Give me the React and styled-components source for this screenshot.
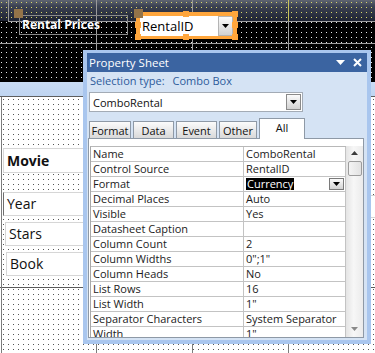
import React from 'react';
import styled, { createGlobalStyle } from 'styled-components';

const font = `"Open Sans", "Noto Sans", "DejaVu Sans", sans-serif`;

const Global = createGlobalStyle`
  html, body { margin: 0; padding: 0; background: #ffffff; }
  body { font-family: ${font}; }
  #root { width: 375px; height: 353px; overflow: hidden; }
`;

const dot = (c) => `conic-gradient(at 1px 1px, transparent 270deg, ${c} 0)`;
const solid = (c) => `linear-gradient(${c}, ${c})`;

const Canvas = styled.div`
  position: relative;
  width: 375px;
  height: 353px;
  overflow: hidden;
  display: flex;
  flex-direction: column;
  font-family: ${font};
`;

const HeaderSection = styled.div`
  position: relative;
  flex: none;
  height: 82px;
  display: flex;
  flex-direction: column;
`;

const HeaderBand = styled.div`
  height: 21px;
  flex: none;
  background-color: #1e2331;
  background-image: ${solid('#9a9a9a')}, ${solid('#9a9a9a')}, ${solid('#9a9a9a')},
    ${solid('#c9c35c')}, ${dot('#d9d66c')},
    linear-gradient(#606672, #3c4252 6px, #1e2332);
  background-size: 1px 100%, 1px 100%, 1px 100%, 1px 100%, 5px 5px, 100% 100%;
  background-position: 8px 0, 96px 0, 192px 0, 288px 0, 1px 2px, 0 0;
  background-repeat: no-repeat, no-repeat, no-repeat, no-repeat, repeat, no-repeat;
`;

const HeaderGrid = styled.div`
  flex: 1;
  background-color: #000;
  background-image: ${solid('#a0a0a0')}, ${solid('#a0a0a0')}, ${solid('#a0a0a0')},
    ${solid('#a0a0a0')}, ${solid('#a0a0a0')}, ${dot('#e4e4e4')};
  background-size: 1px 100%, 1px 100%, 1px 100%, calc(100% - 8px) 1px, 100% 1px, 5px 5px;
  background-position: 96px 0, 192px 0, 288px 0, 8px 0, 0 22px, 1px 1px;
  background-repeat: no-repeat, no-repeat, no-repeat, no-repeat, no-repeat, repeat;
`;

const SectionBar = styled.div`
  flex: none;
  height: 14px;
  background: linear-gradient(#cadcf4, #bfd5f1);
  border-bottom: 1px solid #5e5e5e;
`;

const DetailSection = styled.div`
  position: relative;
  flex: 1;
  background-color: #fff;
  background-image: ${solid('#7c7c7c')}, ${solid('#7c7c7c')}, ${solid('#7c7c7c')},
    ${solid('#7c7c7c')}, ${solid('#5a5a5a')}, ${dot('#555')};
  background-size: 1px 100%, 1px 100%, 1px 100%, 1px 100%, 100% 1px, 5px 5px;
  background-position: 1px 0, 96px 0, 192px 0, 288px 0, 0 190px, 3px 2px;
  background-repeat: no-repeat, no-repeat, no-repeat, no-repeat, no-repeat, repeat;
`;

/* ---------- design-surface controls (placed on the free canvas) ---------- */

const LabelCtl = styled.div`
  position: absolute;
  left: 19px;
  top: 15px;
  width: 109px;
  height: 20px;
  box-sizing: border-box;
  border: 1px solid #8a8a8a;
  padding-left: 2px;
  color: #fff;
  font-size: 12px;
  font-weight: 700;
  line-height: 18px;
  white-space: nowrap;
`;

const MoveHandle = styled.div`
  position: absolute;
  left: ${(p) => p.x}px;
  top: ${(p) => p.y}px;
  width: 9px;
  height: 9px;
  background: #947449;
  z-index: 3;
`;

const SizeHandle = styled.div`
  position: absolute;
  left: ${(p) => p.x}px;
  top: ${(p) => p.y}px;
  width: 6px;
  height: 6px;
  background: #ffa63c;
  z-index: 2;
`;

const ComboCtl = styled.div`
  position: absolute;
  left: 136px;
  top: 12px;
  width: 101px;
  height: 27px;
  box-sizing: border-box;
  border: 4px solid #ffa63c;
  border-bottom-width: 3px;
  background: #fff;
  display: flex;
`;

const ComboText = styled.div`
  flex: 1;
  padding-left: 2px;
  font-size: 13px;
  line-height: 20px;
  color: #000;
`;

const DropBtn = styled.div`
  flex: none;
  width: ${(p) => p.w || 15}px;
  height: ${(p) => p.h || 20}px;
  box-sizing: border-box;
  border: 1px solid ${(p) => p.bc || '#a3a3a3'};
  background: linear-gradient(#fbfbfb, #d2d2d2);
  display: flex;
  align-items: center;
  justify-content: center;
  margin: ${(p) => p.m || '0'};
`;

const FieldBox = styled.div`
  position: absolute;
  left: ${(p) => p.x}px;
  top: ${(p) => p.y}px;
  width: ${(p) => p.w || 110}px;
  height: ${(p) => p.h || 24}px;
  box-sizing: border-box;
  background: #fff;
  border: 1px solid #d6d6d6;
  border-left-color: ${(p) => p.edge || '#d6d6d6'};
  padding-left: 3px;
  font-size: 14px;
  font-weight: ${(p) => (p.bold ? 700 : 400)};
  line-height: ${(p) => (p.h || 24) - 2}px;
  color: #111;
`;

/* ---------- Property sheet window ---------- */

const Sheet = styled.div`
  position: absolute;
  left: 83px;
  top: 50px;
  width: 288px;
  height: 294px;
  box-sizing: border-box;
  border: 4px solid #a9c6ee;
  border-top-width: 3px;
  background: #d5e3f4;
  display: flex;
  flex-direction: column;
  z-index: 5;
`;

const TitleBar = styled.div`
  flex: none;
  height: 19px;
  background: #3b64a1;
  display: flex;
  align-items: center;
  padding: 0 5px 0 2px;
`;

const Title = styled.div`
  color: #fff;
  font-size: 11.5px;
  line-height: 19px;
`;

const TitleIcons = styled.div`
  margin-left: auto;
  display: flex;
  align-items: center;
  gap: 8px;
`;

const SelectionLine = styled.div`
  flex: none;
  height: 18px;
  line-height: 17px;
  padding-left: 3px;
  font-size: 11px;
  color: #2d5b9b;
  white-space: nowrap;
`;

const SelValue = styled.span`
  margin-left: 8px;
`;

const ObjectCombo = styled.div`
  flex: none;
  margin: 2px 0 0 2px;
  width: 214px;
  height: 20px;
  box-sizing: border-box;
  border: 1px solid #a3abb5;
  background: #fff;
  display: flex;
  align-items: center;
  padding: 0 1px 0 3px;
`;

const ObjectName = styled.div`
  flex: 1;
  font-size: 11px;
  color: #111;
`;

const Tabs = styled.div`
  flex: none;
  margin-top: 6px;
  height: 20px;
  display: flex;
  align-items: flex-end;
  gap: 2px;
  padding-left: 2px;
`;

const Tab = styled.div`
  width: ${(p) => p.w}px;
  height: ${(p) => (p.active ? 21 : 17)}px;
  box-sizing: border-box;
  border: 1px solid #8e99a6;
  border-bottom: none;
  margin-bottom: ${(p) => (p.active ? -1 : 0)}px;
  position: relative;
  z-index: ${(p) => (p.active ? 2 : 0)};
  background: ${(p) => (p.active ? '#fff' : 'linear-gradient(#fbfbfb, #d9d9d9)')};
  text-align: center;
  font-size: 11px;
  line-height: ${(p) => (p.active ? 17 : 17)}px;
  color: #111;
`;

const TabPanel = styled.div`
  flex: 1;
  min-height: 0;
  margin: 0 3px 2px 1px;
  box-sizing: border-box;
  border: 1px solid #8e99a6;
  background: #fff;
  padding: 7px 0 0 1px;
  display: flex;
`;

const GridWrap = styled.div`
  flex: 1;
  display: flex;
  overflow: hidden;
`;

const Grid = styled.div`
  width: 256px;
  flex: none;
  box-sizing: border-box;
  border-left: 1px solid #a8a8a8;
  border-top: 1px solid #b8b8b8;
  display: grid;
  grid-template-columns: 153px 102px;
  grid-auto-rows: 15px;
  align-content: start;
`;

const Cell = styled.div`
  box-sizing: border-box;
  border-right: 1px solid #c3c3c3;
  border-bottom: 1px solid #c3c3c3;
  padding-left: 2px;
  font-size: 11px;
  line-height: 14px;
  color: #1b1b1b;
  white-space: nowrap;
  overflow: hidden;
  display: flex;
  align-items: center;
`;

const Highlight = styled.span`
  background: #000;
  color: #fff;
  padding: 0 1px;
  line-height: 12px;
  height: 12px;
`;

const Scrollbar = styled.div`
  width: 17px;
  flex: none;
  background: linear-gradient(90deg, #e4e4e4, #f7f7f7 45%, #ebebeb);
  display: flex;
  flex-direction: column;
  align-items: center;
`;

const Thumb = styled.div`
  width: 14px;
  height: 15px;
  margin-top: 6px;
  box-sizing: border-box;
  border: 1px solid #9c9c9c;
  border-radius: 2px;
  background: linear-gradient(90deg, #f4f4f4, #e2e2e2);
`;

const Arrow = styled.svg`
  display: block;
  flex: none;
  margin-top: ${(p) => p.mt || 0}px;
  margin-bottom: ${(p) => p.mb || 0}px;
`;

const Spacer = styled.div`
  flex: 1;
`;

const Tri = ({ w = 7, h = 4, color = '#000' }) => (
  <svg width={w} height={h} viewBox={`0 0 ${w} ${h}`}>
    <polygon points={`0,0 ${w},0 ${w / 2},${h}`} fill={color} />
  </svg>
);

const rows = [
  ['Name', 'ComboRental'],
  ['Control Source', 'RentalID'],
  ['Format', 'Currency', true],
  ['Decimal Places', 'Auto'],
  ['Visible', 'Yes'],
  ['Datasheet Caption', ''],
  ['Column Count', '2'],
  ['Column Widths', '0";1"'],
  ['Column Heads', 'No'],
  ['List Rows', '16'],
  ['List Width', '1"'],
  ['Separator Characters', 'System Separator'],
  ['Width', '1"'],
];

const tabs = [
  ['Format', 42],
  ['Data', 41],
  ['Event', 41],
  ['Other', 38],
  ['All', 46],
];

export default function App() {
  return (
    <>
      <Global />
      <Canvas>
        <HeaderSection>
          <HeaderBand />
          <HeaderGrid />
          <LabelCtl>Rental Prices</LabelCtl>
          <MoveHandle x={14} y={9} />
          <ComboCtl>
            <ComboText>RentalID</ComboText>
            <DropBtn w={15} h={20} bc="#b4b4b4">
              <Tri w={7} h={4} />
            </DropBtn>
          </ComboCtl>
          <SizeHandle x={183} y={11} />
          <SizeHandle x={232} y={11} />
          <SizeHandle x={135} y={22} />
          <SizeHandle x={232} y={22} />
          <SizeHandle x={135} y={34} />
          <SizeHandle x={183} y={34} />
          <SizeHandle x={232} y={34} />
          <MoveHandle x={134} y={9} />
        </HeaderSection>
        <SectionBar />
        <DetailSection>
          <FieldBox x={3} y={51} h={25} bold>Movie</FieldBox>
          <FieldBox x={3} y={95} edge="#6e6e6e">Year</FieldBox>
          <FieldBox x={5} y={125}>Stars</FieldBox>
          <FieldBox x={6} y={155}>Book</FieldBox>
          <FieldBox x={300} y={98} w={90} h={23} />
        </DetailSection>

        <Sheet>
          <TitleBar>
            <Title>Property Sheet</Title>
            <TitleIcons>
              <svg width="9" height="5" viewBox="0 0 9 5">
                <polygon points="0,0 9,0 4.5,5" fill="#fff" />
              </svg>
              <svg width="9" height="9" viewBox="0 0 9 9">
                <path d="M1 1 L8 8 M8 1 L1 8" stroke="#fff" strokeWidth="2" />
              </svg>
            </TitleIcons>
          </TitleBar>
          <SelectionLine>
            Selection type:<SelValue>Combo Box</SelValue>
          </SelectionLine>
          <ObjectCombo>
            <ObjectName>ComboRental</ObjectName>
            <DropBtn w={15} h={16} bc="#8a8a8a">
              <Tri w={7} h={4} />
            </DropBtn>
          </ObjectCombo>
          <Tabs>
            {tabs.map(([t, w]) => (
              <Tab key={t} w={w} active={t === 'All'}>
                {t}
              </Tab>
            ))}
          </Tabs>
          <TabPanel>
            <GridWrap>
              <Grid>
                {rows.map(([k, v, sel]) => (
                  <React.Fragment key={k}>
                    <Cell>{k}</Cell>
                    <Cell>
                      {sel ? (
                        <>
                          <Highlight>{v}</Highlight>
                          <Spacer />
                          <DropBtn w={15} h={12} bc="#7a7a7a" m="0 1px 0 0">
                            <Tri w={7} h={4} />
                          </DropBtn>
                        </>
                      ) : (
                        v
                      )}
                    </Cell>
                  </React.Fragment>
                ))}
              </Grid>
              <Scrollbar>
                <Arrow width="7" height="4" viewBox="0 0 7 4" mt={5}>
                  <polygon points="0,4 7,4 3.5,0" fill="#3c3c3c" />
                </Arrow>
                <Thumb />
                <Spacer />
                <Arrow width="7" height="4" viewBox="0 0 7 4" mb={6}>
                  <polygon points="0,0 7,0 3.5,4" fill="#8a8a8a" />
                </Arrow>
              </Scrollbar>
            </GridWrap>
          </TabPanel>
        </Sheet>
      </Canvas>
    </>
  );
}
